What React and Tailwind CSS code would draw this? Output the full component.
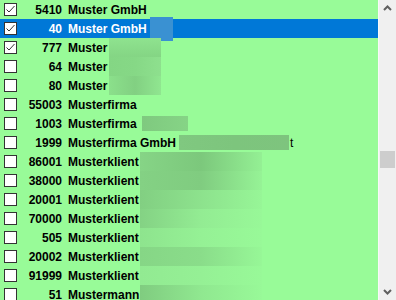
import React from "react";

// redacted parts are kept as flat / shaded blocks after the name
const rows = [
  { id: 5410, name: "Muster GmbH", checked: true },
  { id: 40, name: "Muster GmbH", checked: true, selected: true, mask: "ml-[3px] w-[23px] h-[24px] bg-[#3a91d2]" },
  { id: 777, name: "Muster", checked: true, mask: "ml-[2px] w-[52px] h-[19px] bg-linear-to-b from-[#8fe38f] to-[#84d584]" },
  { id: 64, name: "Muster", mask: "ml-[2px] w-[52px] h-[19px] bg-linear-to-r from-[#84d684] via-[#86d886] to-[#8ee08e]" },
  { id: 80, name: "Muster", mask: "ml-[2px] w-[52px] h-[19px] bg-linear-to-r from-[#8be08b] via-[#82d082] to-[#90e690]" },
  { id: 55003, name: "Musterfirma" },
  { id: 1003, name: "Musterfirma", mask: "ml-[5px] w-[46px] h-[15px] bg-linear-to-r from-[#7fc97f] to-[#86d486]" },
  { id: 1999, name: "Musterfirma GmbH", mask: "ml-[3px] w-[110px] h-[15px] bg-linear-to-r from-[#80c880] via-[#7dc57d] to-[#7ec47e]", tail: "t" },
  { id: 86001, name: "Musterklient", mask: "ml-[1px] w-[122px] h-[19px] bg-linear-to-r from-[#86d486] via-[#7cc87c] to-[#94f094]" },
  { id: 38000, name: "Musterklient", mask: "ml-[1px] w-[122px] h-[19px] bg-linear-to-r from-[#84d184] via-[#80cc80] to-[#96f396]" },
  { id: 20001, name: "Musterklient", mask: "ml-[1px] w-[122px] h-[19px] bg-linear-to-r from-[#82cf82] via-[#8de28d] to-[#97f697]" },
  { id: 70000, name: "Musterklient", mask: "ml-[1px] w-[122px] h-[19px] bg-linear-to-r from-[#84d284] via-[#93ec93] to-[#98f898]" },
  { id: 505, name: "Musterklient", mask: "ml-[1px] w-[122px] h-[19px] bg-linear-to-r from-[#8ee48e] via-[#95f195] to-[#98f998]" },
  { id: 20002, name: "Musterklient", mask: "ml-[1px] w-[122px] h-[19px] bg-linear-to-r from-[#86d686] via-[#8add8a] to-[#97f797]" },
  { id: 91999, name: "Musterklient", mask: "ml-[1px] w-[122px] h-[19px] bg-linear-to-r from-[#92ea92] via-[#95f095] to-[#98f998]" },
  { id: 51, name: "Mustermann", mask: "ml-[1px] w-[122px] h-[19px] bg-linear-to-r from-[#80cc80] via-[#90e890] to-[#98f998]" },
];

const CheckBox = ({ checked }) => (
  <div className="w-[13px] h-[13px] border border-[#333333] bg-white flex items-center justify-center shrink-0">
    {checked && (
      <svg width="11" height="11" viewBox="0 0 11 11">
        <path d="M1.5 5.5 L4 8 L9.5 2" stroke="#333333" strokeWidth="1" fill="none" />
      </svg>
    )}
  </div>
);

const Row = ({ row }) => (
  <div
    className={
      "h-[19px] flex items-center pl-1 shrink-0 " +
      (row.selected ? "bg-[#0078d7] text-white" : "text-black")
    }
  >
    <CheckBox checked={row.checked} />
    <span className="w-[45px] text-right">{row.id}</span>
    <span className="ml-[6px] whitespace-nowrap">{row.name}</span>
    {row.mask && <span className={"shrink-0 " + row.mask} />}
    {row.tail && <span className="ml-[1px] font-normal">{row.tail}</span>}
  </div>
);

export default function App() {
  return (
    <div className="w-[396px] h-[300px] flex overflow-hidden bg-[#98fb98]">
      <div
        className="flex-1 flex flex-col font-bold text-[12px]"
        style={{ fontFamily: "'Liberation Sans', Arial, sans-serif" }}
      >
        {rows.map((row) => (
          <Row key={row.id} row={row} />
        ))}
      </div>
      <div className="w-[18px] h-full bg-[#f0f0f0] border-l border-[#f8f8f8] flex flex-col items-center justify-between">
        <svg width="17" height="17" viewBox="0 0 17 17">
          <path d="M5 10 L8.5 6.5 L12 10" stroke="#606060" strokeWidth="2" fill="none" />
        </svg>
        <div className="flex-1 w-full flex flex-col pt-[134px]">
          <div className="mx-[1px] h-[17px] bg-[#cdcdcd]" />
        </div>
        <svg width="17" height="17" viewBox="0 0 17 17">
          <path d="M5 7 L8.5 10.5 L12 7" stroke="#606060" strokeWidth="2" fill="none" />
        </svg>
      </div>
    </div>
  );
}
